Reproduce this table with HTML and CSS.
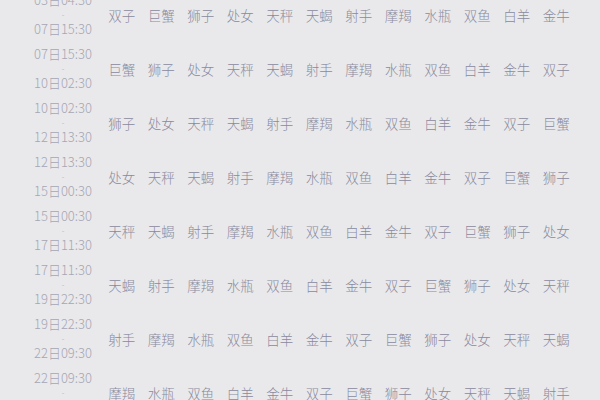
FILE: index.html
```html
<!DOCTYPE html>
<html lang="zh">
<head>
<meta charset="utf-8">
<link rel="stylesheet" href="styles.css">
</head>
<body>
<div class="table">
  <div class="row">
    <div class="date"><span>03日04:30</span><span class="dash">-</span><span>07日15:30</span></div>
    <span class="sign">双子</span><span class="sign">巨蟹</span><span class="sign">狮子</span><span class="sign">处女</span><span class="sign">天秤</span><span class="sign">天蝎</span><span class="sign">射手</span><span class="sign">摩羯</span><span class="sign">水瓶</span><span class="sign">双鱼</span><span class="sign">白羊</span><span class="sign">金牛</span>
  </div>
  <div class="row">
    <div class="date"><span>07日15:30</span><span class="dash">-</span><span>10日02:30</span></div>
    <span class="sign">巨蟹</span><span class="sign">狮子</span><span class="sign">处女</span><span class="sign">天秤</span><span class="sign">天蝎</span><span class="sign">射手</span><span class="sign">摩羯</span><span class="sign">水瓶</span><span class="sign">双鱼</span><span class="sign">白羊</span><span class="sign">金牛</span><span class="sign">双子</span>
  </div>
  <div class="row">
    <div class="date"><span>10日02:30</span><span class="dash">-</span><span>12日13:30</span></div>
    <span class="sign">狮子</span><span class="sign">处女</span><span class="sign">天秤</span><span class="sign">天蝎</span><span class="sign">射手</span><span class="sign">摩羯</span><span class="sign">水瓶</span><span class="sign">双鱼</span><span class="sign">白羊</span><span class="sign">金牛</span><span class="sign">双子</span><span class="sign">巨蟹</span>
  </div>
  <div class="row">
    <div class="date"><span>12日13:30</span><span class="dash">-</span><span>15日00:30</span></div>
    <span class="sign">处女</span><span class="sign">天秤</span><span class="sign">天蝎</span><span class="sign">射手</span><span class="sign">摩羯</span><span class="sign">水瓶</span><span class="sign">双鱼</span><span class="sign">白羊</span><span class="sign">金牛</span><span class="sign">双子</span><span class="sign">巨蟹</span><span class="sign">狮子</span>
  </div>
  <div class="row">
    <div class="date"><span>15日00:30</span><span class="dash">-</span><span>17日11:30</span></div>
    <span class="sign">天秤</span><span class="sign">天蝎</span><span class="sign">射手</span><span class="sign">摩羯</span><span class="sign">水瓶</span><span class="sign">双鱼</span><span class="sign">白羊</span><span class="sign">金牛</span><span class="sign">双子</span><span class="sign">巨蟹</span><span class="sign">狮子</span><span class="sign">处女</span>
  </div>
  <div class="row">
    <div class="date"><span>17日11:30</span><span class="dash">-</span><span>19日22:30</span></div>
    <span class="sign">天蝎</span><span class="sign">射手</span><span class="sign">摩羯</span><span class="sign">水瓶</span><span class="sign">双鱼</span><span class="sign">白羊</span><span class="sign">金牛</span><span class="sign">双子</span><span class="sign">巨蟹</span><span class="sign">狮子</span><span class="sign">处女</span><span class="sign">天秤</span>
  </div>
  <div class="row">
    <div class="date"><span>19日22:30</span><span class="dash">-</span><span>22日09:30</span></div>
    <span class="sign">射手</span><span class="sign">摩羯</span><span class="sign">水瓶</span><span class="sign">双鱼</span><span class="sign">白羊</span><span class="sign">金牛</span><span class="sign">双子</span><span class="sign">巨蟹</span><span class="sign">狮子</span><span class="sign">处女</span><span class="sign">天秤</span><span class="sign">天蝎</span>
  </div>
  <div class="row">
    <div class="date"><span>22日09:30</span><span class="dash">-</span><span>24日20:30</span></div>
    <span class="sign">摩羯</span><span class="sign">水瓶</span><span class="sign">双鱼</span><span class="sign">白羊</span><span class="sign">金牛</span><span class="sign">双子</span><span class="sign">巨蟹</span><span class="sign">狮子</span><span class="sign">处女</span><span class="sign">天秤</span><span class="sign">天蝎</span><span class="sign">射手</span>
  </div>
</div>
</body>
</html>
```
FILE: styles.css
```css
html, body {
  margin: 0;
  padding: 0;
  background: #e9e9eb;
  overflow: hidden;
}
body {
  font-family: "Noto Sans CJK SC", "Noto Sans", sans-serif;
  width: 600px;
  height: 400px;
}
.table {
  display: flex;
  flex-direction: column;
  margin-top: -12px;
  padding-left: 24px;
}
.row {
  display: flex;
  align-items: center;
  height: 54px;
}
.date {
  width: 78px;
  display: flex;
  flex-direction: column;
  align-items: center;
  font-size: 13px;
  line-height: 14.5px;
  font-weight: 300;
  color: #a6a6b4;
}
.dash {
  font-size: 8px;
}
.sign {
  width: 39.5px;
  text-align: center;
  font-size: 13.5px;
  font-weight: 300;
  color: #8a8a9e;
}
```
